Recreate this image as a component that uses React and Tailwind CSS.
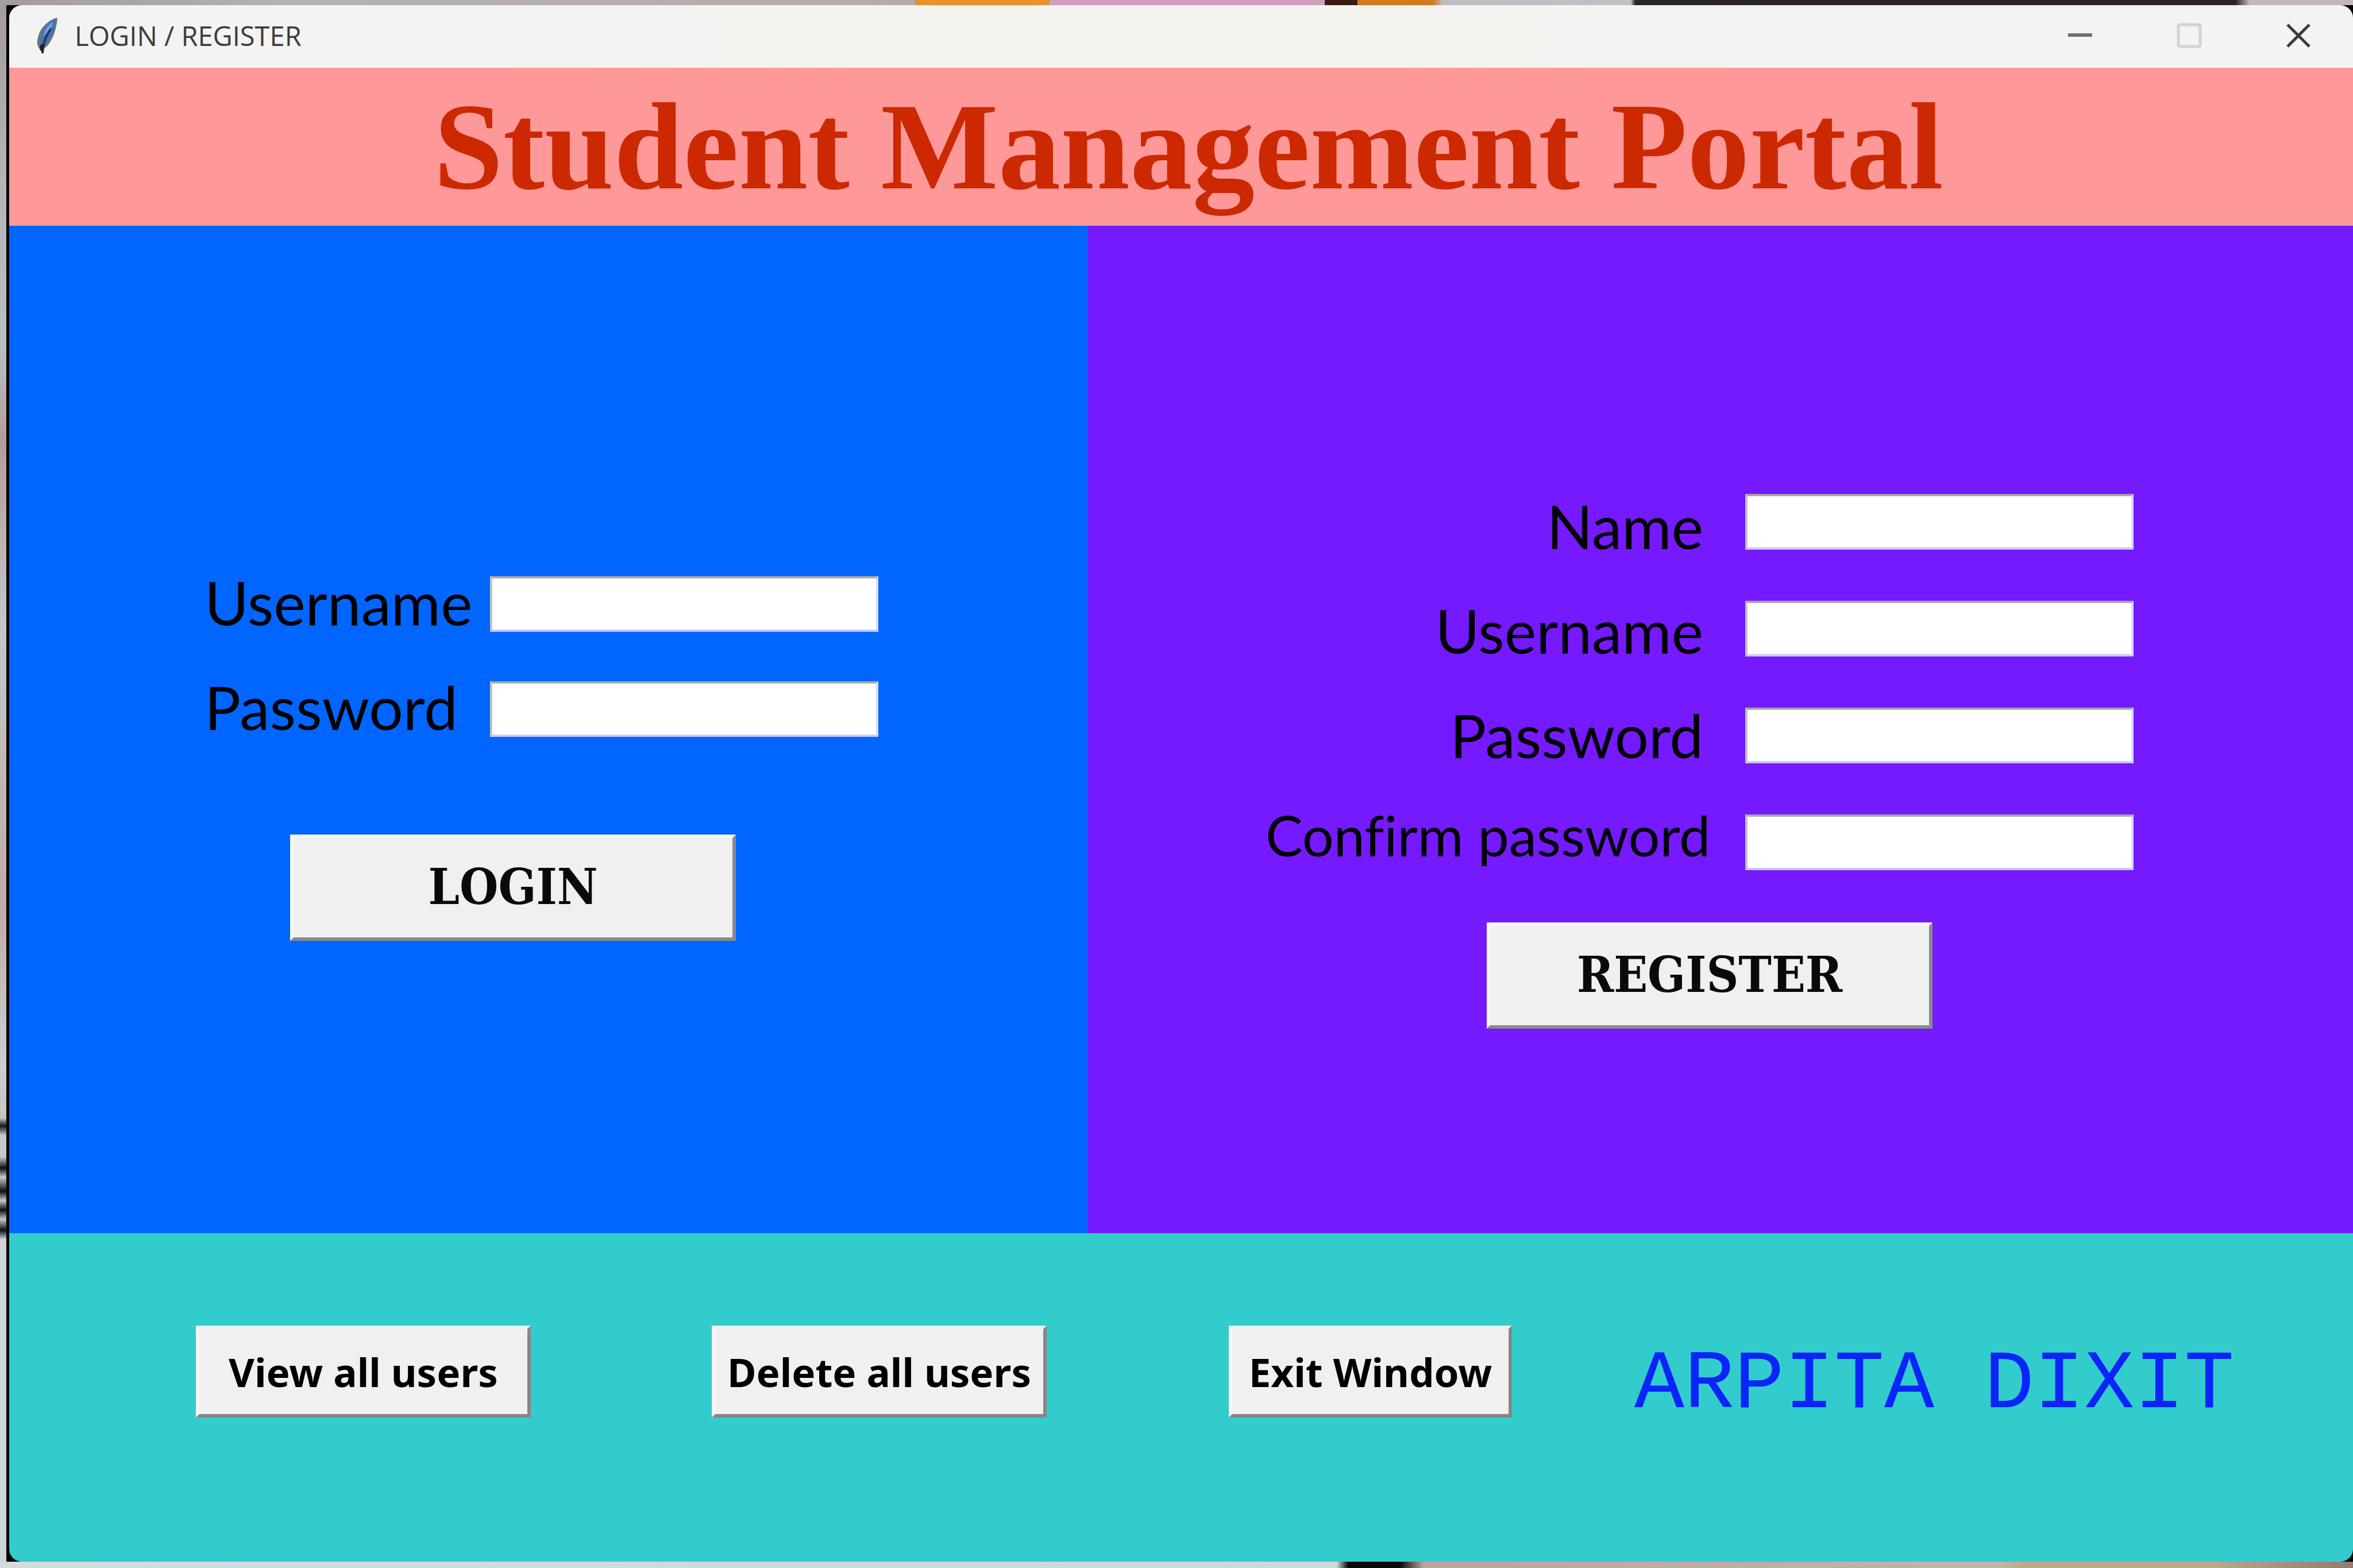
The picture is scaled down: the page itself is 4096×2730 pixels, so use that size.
function Feather() {
  return (
    <svg viewBox="0 0 40 64" className="h-16 w-10 shrink-0" aria-hidden="true">
      <path d="M38 1C25 3 9 17 5 32C2 42 2 48 6 54L12 63L15 54C25 49 36 27 38 1Z" fill="#6b737d" />
      <path d="M34 4C23 8 12 22 9 36C8 42 9 46 11 49C23 42 35 22 34 4Z" fill="#3f74bd" />
      <path d="M30 8C21 14 15 23 13 33L20 27C27 20 30 14 30 8Z" fill="#6f9fe6" />
      <path d="M27 20C19 30 13 42 12 63" fill="none" stroke="#1f3a66" strokeWidth="4" />
      <path d="M8 48L15 46L15 54L12 63L7 55Z" fill="#22262c" />
    </svg>
  );
}

const control = "flex h-[109px] w-[190px] items-center justify-center";

function TitleBar() {
  return (
    <header className="flex h-[109px] shrink-0 items-center justify-between bg-[linear-gradient(90deg,#f3f3f3_20%,#f4f3ee_40%,#f4f3ee_55%,#f2f3f5_85%)] pb-1 pl-[46px] text-[#3c3c3c]">
      <div className="flex items-center gap-[28px]">
        <Feather />
        <span className="font-['Segoe_UI','Open_Sans',sans-serif] text-[47px] leading-[64px]">LOGIN / REGISTER</span>
      </div>
      <div className="flex items-center">
        <button aria-label="Minimize" className={control}>
          <svg viewBox="0 0 46 46" className="size-[46px]"><path d="M2 22H44" stroke="#707070" strokeWidth="6" /></svg>
        </button>
        <button aria-label="Maximize" disabled className={control}>
          <svg viewBox="0 0 46 46" className="size-[46px]"><rect x="4" y="4" width="38" height="38" rx="3" fill="none" stroke="#d2d2d3" strokeWidth="5" /></svg>
        </button>
        <button aria-label="Close" className={control}>
          <svg viewBox="0 0 46 46" className="size-[46px]"><path d="M4 4L42 42M42 4L4 42" stroke="#3c3c3e" strokeWidth="5" /></svg>
        </button>
      </div>
    </header>
  );
}

const entry =
  "h-[97px] w-[676px] border-4 border-t-[#a9a9a9] border-l-[#c4c4c4] border-r-[#d9d9f5] border-b-[#c9c9f5] bg-white px-4 text-[56px] text-black outline-none";

const bigButton =
  "h-[185px] w-[776px] border-[6px] border-t-[#f7f7f7] border-l-[#f7f7f7] border-r-[#8a8a8a] border-b-[#8a8a8a] bg-[#f0f0f0] pb-1 font-['Algerian','DejaVu_Serif_Condensed','DejaVu_Serif',serif] text-[86px] font-bold leading-none text-[#0a0a0a]";

const footButton =
  "h-[160px] border-[6px] border-t-[#e4f3f3] border-l-[#f7f7f7] border-r-[#8c8484] border-b-[#8c8484] bg-[#f0f0f0] font-['Noto_Sans',sans-serif] text-[69px] font-bold leading-none text-black";

const labels = "flex flex-col font-['Comic_Sans_MS','Lato',sans-serif] text-[105px] leading-[182px] text-black";

function LoginForm() {
  return (
    <form className="flex w-[1878px] shrink flex-col bg-[#0066ff] pt-[564px] pl-[340px]" onSubmit={(e) => e.preventDefault()}>
      <div className="flex gap-[31px]">
        <div className={`${labels} w-[466px]`}>
          <label htmlFor="login-user">Username</label>
          <label htmlFor="login-pass">Password</label>
        </div>
        <div className="flex flex-col gap-[86px] pt-[46px]">
          <input id="login-user" type="text" className={entry} />
          <input id="login-pass" type="password" className={entry} />
        </div>
      </div>
      <button type="submit" className={`${bigButton} mt-[132px] ml-[149px]`}>LOGIN</button>
    </form>
  );
}

function RegisterForm() {
  return (
    <form className="flex flex-1 flex-col bg-[#7519ff] pt-[431px] pl-[309px]" onSubmit={(e) => e.preventDefault()}>
      <div className="flex gap-[61px]">
        <div className={`${labels} w-[774px] text-right`}>
          <label htmlFor="reg-name" className="pr-3">Name</label>
          <label htmlFor="reg-user" className="pr-3">Username</label>
          <label htmlFor="reg-pass" className="pr-3">Password</label>
          <label htmlFor="reg-confirm" className="text-[97px] leading-[168px] whitespace-nowrap [font-variant-ligatures:none]">Confirm password</label>
        </div>
        <div className="flex flex-col gap-[89px] pt-[36px]">
          <input id="reg-name" type="text" className={entry} />
          <input id="reg-user" type="text" className={entry} />
          <input id="reg-pass" type="password" className={entry} />
          <input id="reg-confirm" type="password" className={entry} />
        </div>
      </div>
      <button type="submit" className={`${bigButton} mt-[68px] ml-[385px]`}>REGISTER</button>
    </form>
  );
}

export default function App() {
  return (
    <div className="flex h-screen w-full flex-col">
      <div className="h-[9px] shrink-0 bg-[linear-gradient(90deg,#a59b9b_0%,#b5b0b1_12%,#b9aaa8_38.9%,#e8902c_38.9%,#e8902c_44.6%,#cf9fc0_44.6%,#cf9fc0_56.3%,#3a1d10_56.3%,#3a1d10_57.7%,#d27a20_57.7%,#d27a20_60.9%,#bcbcbf_61.3%,#bcc3c7_69.3%,#2b2325_69.5%,#2b2325_95%,#c3b8b8_95.6%)]" />
      <div className="flex flex-1">
        <div className="w-[11px] shrink-0 bg-[linear-gradient(180deg,#a59b9b_0%,#b4b2b3_10%,#b9c0c4_22%,#b59d97_28%,#c2c7c8_40%,#bfaca5_58%,#c9cfd1_68%,#c9c4c1_71.5%,#15151a_72%,#c6c9cb_72.6%,#c6c9cb_74%,#0d0d14_74.7%,#c6c9cb_75.3%,#0d0d14_76.2%,#c6c9cb_76.8%,#0d0d14_77.4%,#c6c9cb_78%,#0d0d14_78.7%,#ced4d7_79.3%,#ced4d7_100%)]" />
        <div className="flex flex-1 bg-black pl-[5px]">
          <main className="flex flex-1 flex-col overflow-hidden rounded-[22px]">
            <TitleBar />
            <h1 className="flex h-[275px] shrink-0 items-center justify-center bg-[#ff9999] pl-[26px] font-['Jokerman','Liberation_Serif',serif] text-[217px] font-bold leading-none text-[#cc2900]">
              Student Management Portal
            </h1>
            <section className="flex flex-1">
              <LoginForm />
              <RegisterForm />
            </section>
            <footer className="flex h-[572px] shrink-0 bg-[#33cccc] pt-[161px] pl-[325px]">
              <button className={`${footButton} w-[583px]`}>View all users</button>
              <button className={`${footButton} ml-[315px] w-[583px]`}>Delete all users</button>
              <button className={`${footButton} ml-[317px] w-[493px]`}>Exit Window</button>
              <p className="pt-[24px] pl-[213px] font-['Liberation_Mono',monospace] text-[145px] leading-[160px] whitespace-nowrap text-[#0a24fa]">
                ARPITA DIXIT
              </p>
            </footer>
          </main>
        </div>
      </div>
      <div className="h-[11px] shrink-0 bg-[linear-gradient(90deg,#d3dbdf_0%,#cfd8dd_56.8%,#0a0808_57.3%,#0a0808_59.5%,#b9a5a0_60.5%,#c4b3ad_85%,#b8a98f_86%,#b8a98f_94%,#8f7c74_100%)]" />
    </div>
  );
}
